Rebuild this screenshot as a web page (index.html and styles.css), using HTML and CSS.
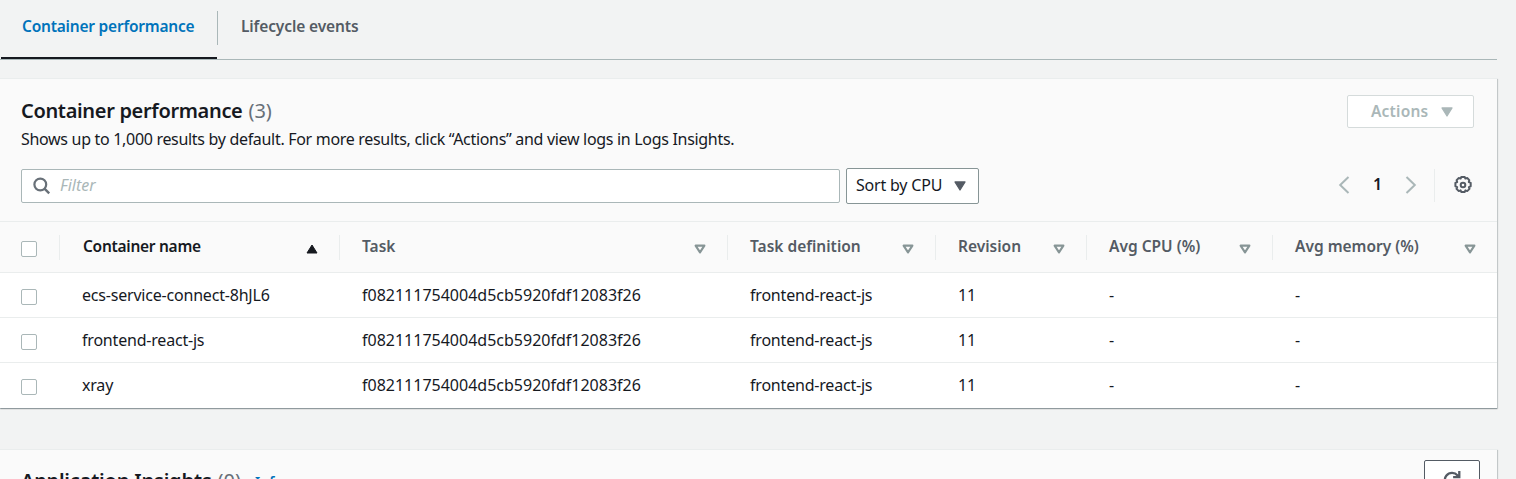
FILE: index.html
```html
<!DOCTYPE html>
<html lang="en">
<head>
<meta charset="utf-8">
<title>Container performance</title>
<link rel="stylesheet" href="styles.css">
</head>
<body>
<nav class="tabs">
  <a class="tab tab-active"><span>Container performance</span></a>
  <a class="tab"><span>Lifecycle events</span></a>
</nav>
<section class="panel">
  <header class="panel-header">
    <div class="heading">
      <h2><span>Container performance</span> <span class="count">(3)</span></h2>
      <p class="description">Shows up to 1,000 results by default. For more results, click “Actions” and view logs in Logs Insights.</p>
    </div>
    <button class="actions" disabled><span>Actions</span><svg width="12" height="10" viewBox="0 0 12 10"><path d="M1 1h10L6 9z" fill="#aab7b8" stroke="#aab7b8" stroke-width="1.3" stroke-linejoin="round"/></svg></button>
  </header>
  <div class="tools">
    <div class="filter">
      <svg width="18" height="18" viewBox="0 0 18 18" fill="none" stroke="#687078" stroke-width="2.2"><circle cx="7.3" cy="7.5" r="5.9"/><path d="M11.5 11.7l4.7 4.7" stroke-width="2.4"/></svg>
      <span class="placeholder">Filter</span>
    </div>
    <div class="sort"><span>Sort by CPU</span><svg width="12" height="10" viewBox="0 0 12 10"><path d="M1 1h10L6 9z" fill="#545b64" stroke="#545b64" stroke-width="1.3" stroke-linejoin="round"/></svg></div>
    <div class="pager">
      <svg width="12" height="18" viewBox="0 0 12 18" fill="none" stroke="#aab7b8" stroke-width="2"><path d="M10.5 1L2.2 9l8.3 8"/></svg>
      <b class="page">1</b>
      <svg width="12" height="18" viewBox="0 0 12 18" fill="none" stroke="#aab7b8" stroke-width="2"><path d="M1.5 1l8.3 8-8.3 8"/></svg>
    </div>
    <div class="settings">
      <svg width="20" height="20" viewBox="0 0 20 20" fill="none" stroke="#545b64"><path stroke-width="2" stroke-linejoin="round" d="M8.3 2h3.4l.7 1.6 1.8-.6 2.1 2.1-.5 1.9 1.9.8v3.5l-1.8.8.6 1.8-2.3 2.2-1.8-.7-.8 1.7H8.4l-.8-1.7-1.8.7-2.3-2.3.7-1.7-1.8-.8V7.8l1.8-.8-.6-1.9L5.8 3l1.8.6z"/><circle cx="10" cy="10" r="2.3" stroke-width="2"/></svg>
    </div>
  </div>
  <div class="row head">
    <div class="check"><i class="box"></i></div>
    <div class="cell sorted"><span>Container name</span><svg width="12" height="10" viewBox="0 0 12 10"><path d="M1 9h10L6 1z" fill="#16191f" stroke="#16191f" stroke-linejoin="round"/></svg></div>
    <div class="cell"><span>Task</span><svg width="12" height="10" viewBox="0 0 12 10"><path d="M1.6 1.6h8.8L6 8.4z" fill="none" stroke="#879596" stroke-width="2.1" stroke-linejoin="round"/></svg></div>
    <div class="cell"><span>Task definition</span><svg width="12" height="10" viewBox="0 0 12 10"><path d="M1.6 1.6h8.8L6 8.4z" fill="none" stroke="#879596" stroke-width="2.1" stroke-linejoin="round"/></svg></div>
    <div class="cell"><span>Revision</span><svg width="12" height="10" viewBox="0 0 12 10"><path d="M1.6 1.6h8.8L6 8.4z" fill="none" stroke="#879596" stroke-width="2.1" stroke-linejoin="round"/></svg></div>
    <div class="cell"><span>Avg CPU (%)</span><svg width="12" height="10" viewBox="0 0 12 10"><path d="M1.6 1.6h8.8L6 8.4z" fill="none" stroke="#879596" stroke-width="2.1" stroke-linejoin="round"/></svg></div>
    <div class="cell"><span>Avg memory (%)</span><svg width="12" height="10" viewBox="0 0 12 10"><path d="M1.6 1.6h8.8L6 8.4z" fill="none" stroke="#879596" stroke-width="2.1" stroke-linejoin="round"/></svg></div>
  </div>
  <div class="row">
    <div class="check"><i class="box"></i></div><div class="cell">ecs-service-connect-8hJL6</div><div class="cell id">f082111754004d5cb5920fdf12083f26</div><div class="cell">frontend-react-js</div><div class="cell">11</div><div class="cell">-</div><div class="cell">-</div>
  </div>
  <div class="row">
    <div class="check"><i class="box"></i></div><div class="cell">frontend-react-js</div><div class="cell id">f082111754004d5cb5920fdf12083f26</div><div class="cell">frontend-react-js</div><div class="cell">11</div><div class="cell">-</div><div class="cell">-</div>
  </div>
  <div class="row">
    <div class="check"><i class="box"></i></div><div class="cell">xray</div><div class="cell id">f082111754004d5cb5920fdf12083f26</div><div class="cell">frontend-react-js</div><div class="cell">11</div><div class="cell">-</div><div class="cell">-</div>
  </div>
</section>
<section class="panel insights">
  <header class="panel-header">
    <h2><span>Application Insights</span> <span class="count">(0)</span></h2>
    <a class="info">Info</a>
    <button class="refresh"><svg width="20" height="20" viewBox="0 0 20 20" fill="none" stroke="#545b64" stroke-width="2.3"><path d="M17 12a7.2 7.2 0 1 1-1.4-6.6M17.3 1v6.2h-6.2"/></svg></button>
  </header>
</section>
</body>
</html>
```
FILE: styles.css
```css
* { box-sizing: border-box; }
body {
  margin: 0;
  height: 479px;
  overflow: hidden;
  background: #f2f3f3;
  color: #16191f;
  font: 16px/22px "Noto Sans", "Open Sans", sans-serif;
  letter-spacing: -.2px;
}
svg { display: block; flex: none; }
h2, p { margin: 0; }
span, p, h2, a { white-space: nowrap; }

.tabs {
  display: flex;
  width: 1497px;
  height: 60px;
  border-bottom: 1px solid #aab7b8;
}
.tab {
  display: flex;
  padding: 15px 23px 0 24px;
  height: 59px;
  color: #545b64;
  font-size: 15.5px;
  font-weight: 600;
  letter-spacing: -.22px;
}
.tab-active {
  width: 216px;
  margin-left: 1px;
  padding-left: 21px;
  color: #0073bb;
  border-bottom: 2px solid #16191f;
}
.tab-active + .tab {
  height: 34px;
  margin-top: 11px;
  padding-top: 4px;
  padding-left: 23px;
  border-left: 1px solid #aab7b8;
  letter-spacing: -.12px;
}

.panel {
  width: 1497px;
  height: 330px;
  margin-top: 18px;
  background: #fafafa;
  border-top: 1px solid #eaeded;
  box-shadow: 0 1px 1px 0 rgba(0, 28, 36, .3), 1px 1px 1px 0 rgba(0, 28, 36, .15);
}
.panel-header {
  display: flex;
  justify-content: space-between;
  height: 90px;
  padding: 16px 23px 0 21px;
}
h2 { font-size: 20px; line-height: 32px; font-weight: 600; letter-spacing: -.33px; }
.count { margin-left: 1px; font-weight: 400; color: #687078; letter-spacing: 0; }
.description { line-height: 24px; letter-spacing: -.31px; }

button {
  display: flex;
  align-items: center;
  background: #fff;
  font: inherit;
  border-radius: 2px;
}
.actions {
  width: 127px;
  height: 33px;
  padding: 0 20px 2px 23px;
  justify-content: space-between;
  border: 1px solid #d5dbdb;
  color: #aab7b8;
  font-size: 15.5px;
  font-weight: 600;
  letter-spacing: .2px;
}
.actions svg { margin-top: 3px; }

.tools {
  display: flex;
  align-items: flex-start;
  height: 52px;
  padding-left: 21px;
}
.filter {
  display: flex;
  align-items: center;
  width: 819px;
  height: 34px;
  padding-left: 11px;
  border: 1px solid #aab7b8;
  border-radius: 2px;
  background: #fff;
}
.placeholder { margin: -2px 0 0 9px; color: #aab7b8; font-style: italic; letter-spacing: 0; }
.sort {
  display: flex;
  align-items: center;
  justify-content: space-between;
  width: 133px;
  height: 36px;
  margin: -1px 0 0 6px;
  padding: 0 12px 2px 9px;
  border: 1px solid #879596;
  border-radius: 2px;
  background: #fff;
}
.sort svg { margin-top: 2px; }
.pager {
  display: flex;
  align-items: center;
  width: 79px;
  margin: 3px 0 0 359px;
  justify-content: space-between;
  height: 26px;
}
.page { font-weight: 600; margin-top: -3px; }
.settings {
  margin-left: 17px;
  padding: 6px 0 0 18px;
  height: 33px;
  border-left: 1px solid #eaeded;
}

.row {
  display: grid;
  grid-template-columns: 59px 280px 388px 208px 151px 186px 225px;
  align-items: center;
  height: 45px;
  background: #fff;
  border-top: 1px solid #eaeded;
}
.row:last-child { height: 46px; padding-bottom: 1px; }
.head {
  height: 51px;
  background: #fafafa;
  color: #545b64;
  font-size: 15.5px;
  font-weight: 600;
  letter-spacing: 0;
}
.check { padding: 4px 0 0 21px; }
.head .check { padding-top: 3px; }
.box {
  display: block;
  width: 16px;
  height: 16px;
  border: 1px solid #aab7b8;
  border-radius: 2px;
  background: #fff;
}
.cell { padding-left: 23px; }
.id { letter-spacing: 0; }
.head .cell {
  display: flex;
  justify-content: space-between;
  height: 25px;
  padding-right: 21px;
  padding-left: 22px;
  border-left: 1px solid #eaeded;
}
.head .cell svg { margin-top: 9px; }
.head .sorted { padding-left: 23px; color: #16191f; letter-spacing: -.28px; }

.insights { height: 60px; margin-top: 41px; }
.insights .panel-header { padding: 10px 17px 0 21px; }
.insights h2 { padding-top: 5px; letter-spacing: -.2px; }
.info {
  margin: 12px auto 0 14px;
  color: #0073bb;
  font-size: 14px;
  font-weight: 600;
  line-height: 20px;
  letter-spacing: 0;
}
.refresh {
  width: 56px;
  height: 36px;
  padding: 4px 0 0;
  justify-content: center;
  border: 1px solid #545b64;
}
```
